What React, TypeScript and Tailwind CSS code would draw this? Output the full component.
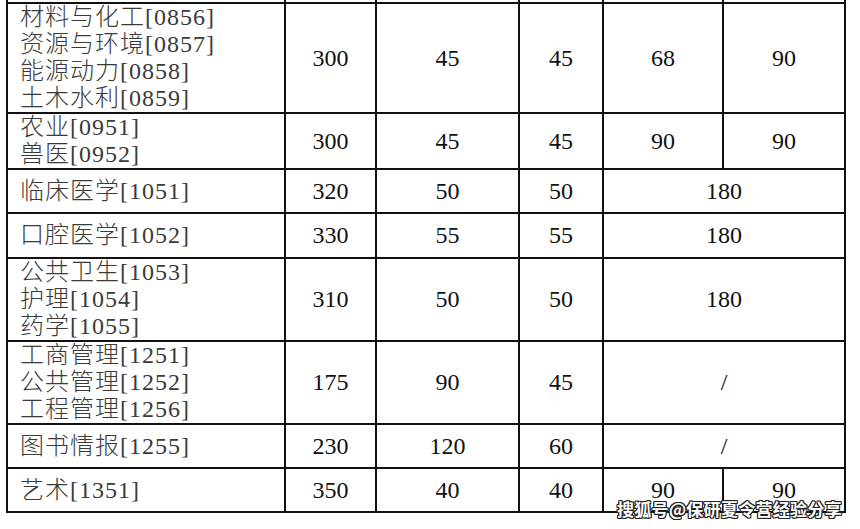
import React from "react";

type Row = {
  names: string[];
  h: number;
  vals: string[];
  merged?: string;
};

const rows: Row[] = [
  {
    names: ["材料与化工[0856]", "资源与环境[0857]", "能源动力[0858]", "土木水利[0859]"],
    h: 108,
    vals: ["300", "45", "45", "68", "90"],
  },
  { names: ["农业[0951]", "兽医[0952]"], h: 54, vals: ["300", "45", "45", "90", "90"] },
  { names: ["临床医学[1051]"], h: 44, vals: ["320", "50", "50"], merged: "180" },
  { names: ["口腔医学[1052]"], h: 45, vals: ["330", "55", "55"], merged: "180" },
  {
    names: ["公共卫生[1053]", "护理[1054]", "药学[1055]"],
    h: 81,
    vals: ["310", "50", "50"],
    merged: "180",
  },
  {
    names: ["工商管理[1251]", "公共管理[1252]", "工程管理[1256]"],
    h: 81,
    vals: ["175", "90", "45"],
    merged: "/",
  },
  { names: ["图书情报[1255]"], h: 44, vals: ["230", "120", "60"], merged: "/" },
  { names: ["艺术[1351]"], h: 44, vals: ["350", "40", "40", "90", "90"] },
];

const cellB = "border-2 border-[#111] p-0 font-['Liberation_Serif','Noto_Sans_CJK_SC',serif]";
const numCell = `${cellB} text-center align-middle text-[24px] leading-[27px] text-[#111]`;

export default function App() {
  return (
    <div className="relative w-[860px] h-[529px] overflow-hidden bg-white pl-[6px] font-serif text-[#111]">
      <table className="table-fixed border-collapse w-[838px] font-['Liberation_Serif','Noto_Sans_CJK_SC',serif]">
        <colgroup>
          <col className="w-[278px]" />
          <col className="w-[91px]" />
          <col className="w-[143px]" />
          <col className="w-[84px]" />
          <col className="w-[120px]" />
          <col className="w-[122px]" />
        </colgroup>
        <tbody>
          <tr className="h-[3px]">
            {[0, 1, 2, 3, 4, 5].map((i) => (
              <td key={i} className="border-x-2 border-[#111] p-0 h-[3px] leading-none text-[1px]"></td>
            ))}
          </tr>
          {rows.map((r, ri) => (
            <tr key={ri} style={{ height: r.h }}>
              <td className={`${cellB} pl-[12px] align-middle`}>
                <div className="flex flex-col font-['Liberation_Serif','Noto_Sans_CJK_SC',serif] text-[24px] leading-[27px] tracking-[1px] font-light text-[#3a3a3a]">
                  {r.names.map((n) => (
                    <span key={n} className="whitespace-nowrap">
                      {n}
                    </span>
                  ))}
                </div>
              </td>
              {r.vals.map((v, vi) => (
                <td key={vi} className={numCell}>
                  {v}
                </td>
              ))}
              {r.merged && (
                <td colSpan={2} className={numCell}>
                  {r.merged}
                </td>
              )}
            </tr>
          ))}
        </tbody>
      </table>
      <div className="absolute left-[617px] top-[499px] whitespace-nowrap font-['Noto_Sans_CJK_SC',sans-serif] text-[17px] leading-[20px] font-bold tracking-[0.3px] text-white [text-shadow:1px_0_0_#222,-1px_0_0_#222,0_1px_0_#222,0_-1px_0_#222,1px_1px_0_#222,-1px_-1px_0_#222,1px_-1px_0_#222,-1px_1px_0_#222]">
        搜狐号@保研夏令营经验分享
      </div>
    </div>
  );
}
